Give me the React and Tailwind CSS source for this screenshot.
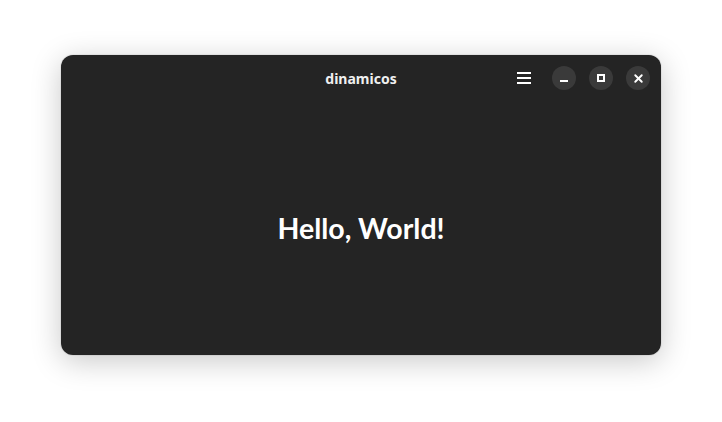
import { X } from 'lucide-react';

export default function App() {
  return (
    <div className="w-[722px] h-[422px] bg-white pt-[55px] pl-[61px]" style={{ fontFamily: '"Noto Sans", sans-serif' }}>
      <div className="w-[600px] h-[300px] rounded-[12px] bg-[#242424] flex flex-col shadow-[0_6px_30px_rgba(0,0,0,0.22),0_0_0_1px_rgba(0,0,0,0.05)]">
        {/* Header bar */}
        <div className="h-[46px] flex items-center relative">
          <div className="absolute inset-0 flex items-center justify-center text-[14px] font-bold text-[#f0f0f0]">
            dinamicos
          </div>
          <div className="ml-auto flex items-center gap-[13px] pr-[11px] relative">
            <button className="w-[24px] h-[24px] flex flex-col items-center justify-center gap-[3px] mr-[3px]">
              <span className="block w-[14px] h-[2px] bg-white"></span>
              <span className="block w-[14px] h-[2px] bg-white"></span>
              <span className="block w-[14px] h-[2px] bg-white"></span>
            </button>
            <button className="w-[24px] h-[24px] rounded-full bg-[#3a3a3a] flex items-center justify-center">
              <span className="block w-[8px] h-[2px] bg-white mt-[6px]"></span>
            </button>
            <button className="w-[24px] h-[24px] rounded-full bg-[#3a3a3a] flex items-center justify-center">
              <span className="block w-[8px] h-[8px] border-2 border-white"></span>
            </button>
            <button className="w-[24px] h-[24px] rounded-full bg-[#3a3a3a] flex items-center justify-center text-white">
              <X size={13} strokeWidth={3.5} />
            </button>
          </div>
        </div>
        {/* Content */}
        <div className="flex-1 flex items-center justify-center">
          <h1 className="text-[28.5px] font-bold text-white" style={{ fontFamily: 'Lato, sans-serif' }}>
            Hello, World!
          </h1>
        </div>
      </div>
    </div>
  );
}
